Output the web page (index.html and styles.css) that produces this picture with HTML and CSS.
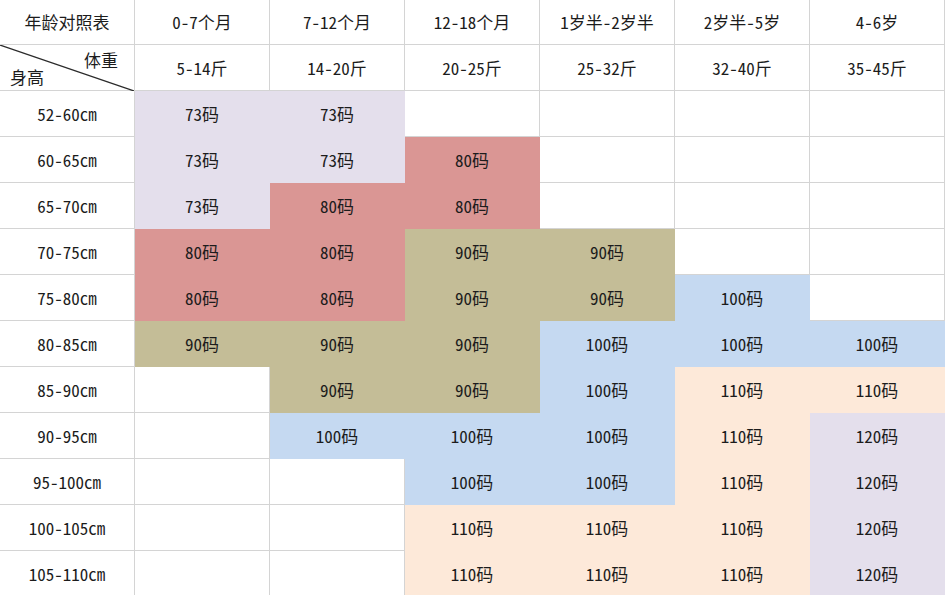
FILE: index.html
```html
<!DOCTYPE html>
<html lang="zh">
<head>
<meta charset="utf-8">
<link rel="stylesheet" href="styles.css">
</head>
<body>
<div class="chart">
  <div class="cell head">年龄对照表</div>
  <div class="cell head">0-7个月</div>
  <div class="cell head">7-12个月</div>
  <div class="cell head">12-18个月</div>
  <div class="cell head">1岁半-2岁半</div>
  <div class="cell head">2岁半-5岁</div>
  <div class="cell head">4-6岁</div>

  <div class="cell corner">
    <svg class="diag" viewBox="0 0 134 46" preserveAspectRatio="none"><line x1="0" y1="0" x2="134" y2="46" stroke="#2b2b2b" stroke-width="1.2"/></svg>
    <span class="c-top">体重</span>
    <span class="c-bot">身高</span>
  </div>
  <div class="cell w">5-14斤</div>
  <div class="cell w">14-20斤</div>
  <div class="cell w">20-25斤</div>
  <div class="cell w">25-32斤</div>
  <div class="cell w">32-40斤</div>
  <div class="cell w">35-45斤</div>

  <div class="cell">52-60cm</div>
  <div class="cell lav">73码</div><div class="cell lav">73码</div><div class="cell"></div><div class="cell"></div><div class="cell"></div><div class="cell"></div>

  <div class="cell">60-65cm</div>
  <div class="cell lav">73码</div><div class="cell lav">73码</div><div class="cell red">80码</div><div class="cell"></div><div class="cell"></div><div class="cell"></div>

  <div class="cell">65-70cm</div>
  <div class="cell lav">73码</div><div class="cell red">80码</div><div class="cell red">80码</div><div class="cell"></div><div class="cell"></div><div class="cell"></div>

  <div class="cell">70-75cm</div>
  <div class="cell red">80码</div><div class="cell red">80码</div><div class="cell tan">90码</div><div class="cell tan">90码</div><div class="cell"></div><div class="cell"></div>

  <div class="cell">75-80cm</div>
  <div class="cell red">80码</div><div class="cell red">80码</div><div class="cell tan">90码</div><div class="cell tan">90码</div><div class="cell blue">100码</div><div class="cell"></div>

  <div class="cell">80-85cm</div>
  <div class="cell tan">90码</div><div class="cell tan">90码</div><div class="cell tan">90码</div><div class="cell blue">100码</div><div class="cell blue">100码</div><div class="cell blue">100码</div>

  <div class="cell">85-90cm</div>
  <div class="cell"></div><div class="cell tan">90码</div><div class="cell tan">90码</div><div class="cell blue">100码</div><div class="cell peach">110码</div><div class="cell peach">110码</div>

  <div class="cell">90-95cm</div>
  <div class="cell"></div><div class="cell blue">100码</div><div class="cell blue">100码</div><div class="cell blue">100码</div><div class="cell peach">110码</div><div class="cell lav2">120码</div>

  <div class="cell">95-100cm</div>
  <div class="cell"></div><div class="cell"></div><div class="cell blue">100码</div><div class="cell blue">100码</div><div class="cell peach">110码</div><div class="cell lav2">120码</div>

  <div class="cell">100-105cm</div>
  <div class="cell"></div><div class="cell"></div><div class="cell peach">110码</div><div class="cell peach">110码</div><div class="cell peach">110码</div><div class="cell lav2">120码</div>

  <div class="cell">105-110cm</div>
  <div class="cell"></div><div class="cell"></div><div class="cell peach">110码</div><div class="cell peach">110码</div><div class="cell peach">110码</div><div class="cell lav2">120码</div>
</div>
</body>
</html>
```
FILE: styles.css
```css
html, body {
  margin: 0;
  padding: 0;
  background: #ffffff;
}
body {
  font-family: "Noto Sans Mono CJK SC", "Noto Sans CJK SC", "Noto Sans", sans-serif;
  font-size: 17px;
  color: #1c1c1c;
  overflow: hidden;
}
.chart {
  display: grid;
  grid-template-columns: repeat(7, 135px);
  grid-template-rows: 45px repeat(12, 46px);
  width: 945px;
}
.cell {
  box-sizing: border-box;
  border-right: 1px solid #d4d4d4;
  border-bottom: 1px solid #d4d4d4;
  display: flex;
  align-items: center;
  justify-content: center;
  line-height: 1;
  background: #ffffff;
}
.head {
  padding-bottom: 1px;
}
.corner {
  position: relative;
  flex-direction: column;
  align-items: stretch;
  justify-content: space-between;
  padding: 6px 16px 8px 10px;
}
.diag {
  position: absolute;
  left: 0;
  top: 0;
  width: 134px;
  height: 46px;
}
.c-top {
  align-self: flex-end;
}
.c-bot {
  align-self: flex-start;
}
.lav { background: #e4dfec; border-color: #e4dfec; }
.lav2 { background: #e4dfec; border-color: #e4dfec; }
.red { background: #da9694; border-color: #da9694; }
.tan { background: #c4bd97; border-color: #c4bd97; }
.blue { background: #c5d9f1; border-color: #c5d9f1; }
.peach { background: #fde9d9; border-color: #fde9d9; }
```
